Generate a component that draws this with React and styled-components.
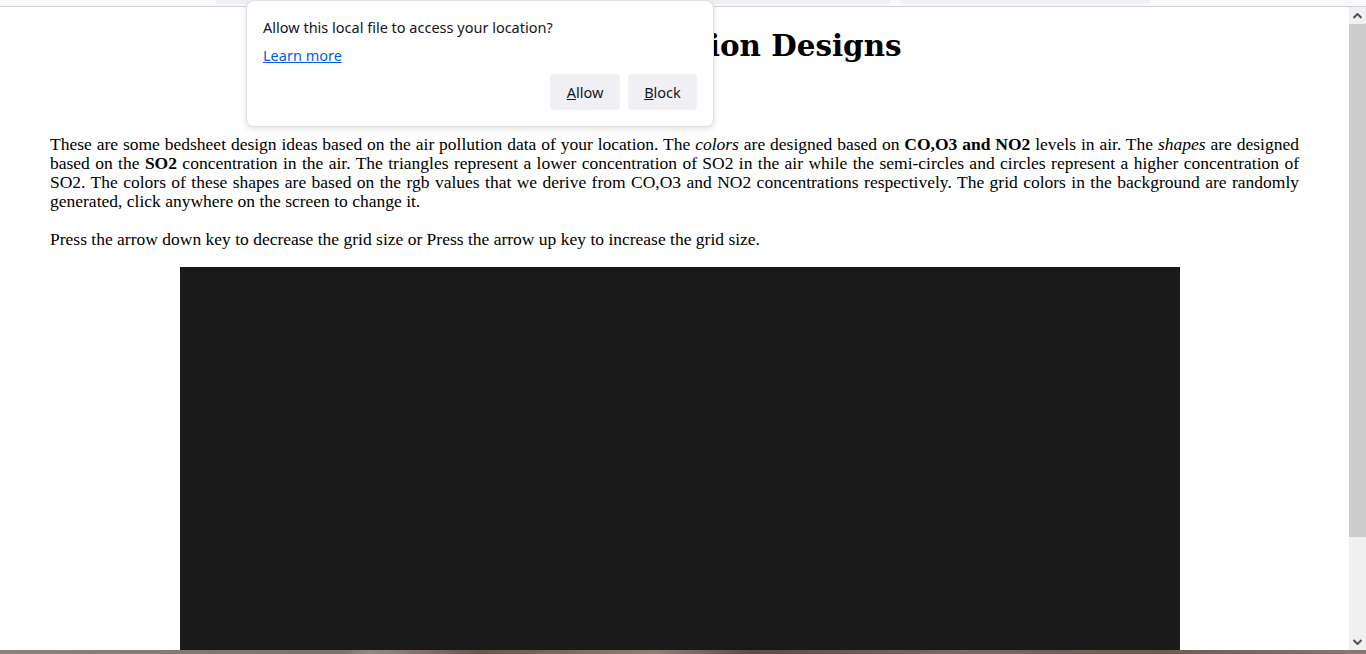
import React from "react";
import styled, { createGlobalStyle } from "styled-components";

const Global = createGlobalStyle`
  html, body { margin: 0; padding: 0; background: #fff; overflow: hidden; }
  #root { width: 1366px; height: 654px; }
`;

const Frame = styled.div`
  position: relative;
  width: 1366px;
  height: 654px;
  display: flex;
  flex-direction: column;
  overflow: hidden;
`;

const Chrome = styled.div`
  height: 6px;
  flex: none;
  background: #f9f9fb;
  border-bottom: 1px solid #cfcfd8;
  display: flex;
  align-items: flex-start;
  gap: 10px;
  padding-left: 215px;
`;

const Tab = styled.div`
  width: ${(p) => p.$w}px;
  height: 4px;
  background: #f0f0f4;
  border-radius: 0 0 4px 4px;
`;

const Main = styled.div`
  flex: 1;
  display: flex;
  min-height: 0;
`;

const Page = styled.div`
  flex: 1;
  overflow: hidden;
  padding: 0 50px;
  font-family: "Liberation Serif", "DejaVu Serif", serif;
  color: #000;
`;

const Heading = styled.h1`
  margin: 19px 0 0;
  font-family: "DejaVu Serif", serif;
  font-size: 29.4px;
  line-height: 40px;
  font-weight: bold;
  text-align: center;
`;

const Intro = styled.div`
  margin-top: 69px;
  font-size: 17.5px;
  line-height: 19px;
`;

const Line = styled.div`
  height: 19px;
  text-align: justify;
  text-align-last: ${(p) => (p.$last ? "left" : "justify")};
  margin-bottom: ${(p) => (p.$gap ? "19px" : "0")};
  white-space: nowrap;
`;

const Canvas = styled.div`
  margin: 18px 0 0 130px;
  width: 1000px;
  height: 600px;
  background: #1a1a1a;
`;

const Scrollbar = styled.div`
  width: 17px;
  flex: none;
  background: #f0f0f0;
  display: flex;
  flex-direction: column;
`;

const Arrow = styled.div`
  height: 17px;
  flex: none;
  display: flex;
  align-items: center;
  justify-content: center;
`;

const Thumb = styled.div`
  height: 513px;
  flex: none;
  background: #cdcdcd;
`;

const Track = styled.div`
  flex: 1;
`;

const Desktop = styled.div`
  height: 4px;
  flex: none;
  background: linear-gradient(
    90deg,
    #8c807c 0%,
    #7d716c 25%,
    #938985 27%,
    #6a5850 35%,
    #8f7d76 48%,
    #5e4d46 55%,
    #7a6a63 70%,
    #6d5b53 85%,
    #887873 100%
  );
`;

const Popup = styled.div`
  position: absolute;
  left: 246px;
  top: 0;
  width: 434px;
  height: 93px;
  padding: 16px;
  background: #fff;
  border: 1px solid #e0e0e6;
  border-radius: 8px;
  box-shadow: 0 2px 6px rgba(0, 0, 0, 0.12);
  font-family: "Segoe UI", "Noto Sans", "Open Sans", sans-serif;
  color: #15141a;
  display: flex;
  flex-direction: column;
`;

const PopupTitle = styled.div`
  font-size: 14.5px;
  line-height: 20px;
`;

const LearnMore = styled.a`
  margin-top: 8px;
  font-size: 14.5px;
  line-height: 20px;
  color: #0061e0;
  text-decoration: underline;
  align-self: flex-start;
`;

const Buttons = styled.div`
  margin-top: auto;
  display: flex;
  justify-content: flex-end;
  gap: 8px;
`;

const Button = styled.button`
  height: 36px;
  width: ${(p) => p.$w}px;
  border: none;
  border-radius: 4px;
  background: #f0f0f4;
  color: #15141a;
  font-family: inherit;
  font-size: 14.5px;
  padding: 0;
  u { text-decoration: underline; }
`;

const Chevron = ({ up }) => (
  <svg width="9" height="6" viewBox="0 0 9 6">
    <path
      d={up ? "M0.5 5 L4.5 1 L8.5 5" : "M0.5 1 L4.5 5 L8.5 1"}
      fill="none"
      stroke="#505050"
      strokeWidth="2"
    />
  </svg>
);

export default function App() {
  return (
    <Frame>
      <Global />
      <Chrome>
        <Tab $w={675} />
        <Tab $w={250} />
      </Chrome>
      <Main>
        <Page>
          <Heading>Bedsheet Pollution Designs</Heading>
          <Intro>
            <Line>
              These are some bedsheet design ideas based on the air pollution data of your location. The <i>colors</i> are designed based on <b>CO,O3 and NO2</b> levels in air. The <i>shapes</i> are designed
            </Line>
            <Line>
              based on the <b>SO2</b> concentration in the air. The triangles represent a lower concentration of SO2 in the air while the semi-circles and circles represent a higher concentration of
            </Line>
            <Line>
              SO2. The colors of these shapes are based on the rgb values that we derive from CO,O3 and NO2 concentrations respectively. The grid colors in the background are randomly
            </Line>
            <Line $last $gap>
              generated, click anywhere on the screen to change it.
            </Line>
            <Line $last>
              Press the arrow down key to decrease the grid size or Press the arrow up key to increase the grid size.
            </Line>
          </Intro>
          <Canvas />
        </Page>
        <Scrollbar>
          <Arrow>
            <Chevron up />
          </Arrow>
          <Thumb />
          <Track />
          <Arrow>
            <Chevron />
          </Arrow>
        </Scrollbar>
      </Main>
      <Desktop />
      <Popup>
        <PopupTitle>Allow this local file to access your location?</PopupTitle>
        <LearnMore href="#">Learn more</LearnMore>
        <Buttons>
          <Button $w={70}>
            <u>A</u>llow
          </Button>
          <Button $w={69}>
            <u>B</u>lock
          </Button>
        </Buttons>
      </Popup>
    </Frame>
  );
}
